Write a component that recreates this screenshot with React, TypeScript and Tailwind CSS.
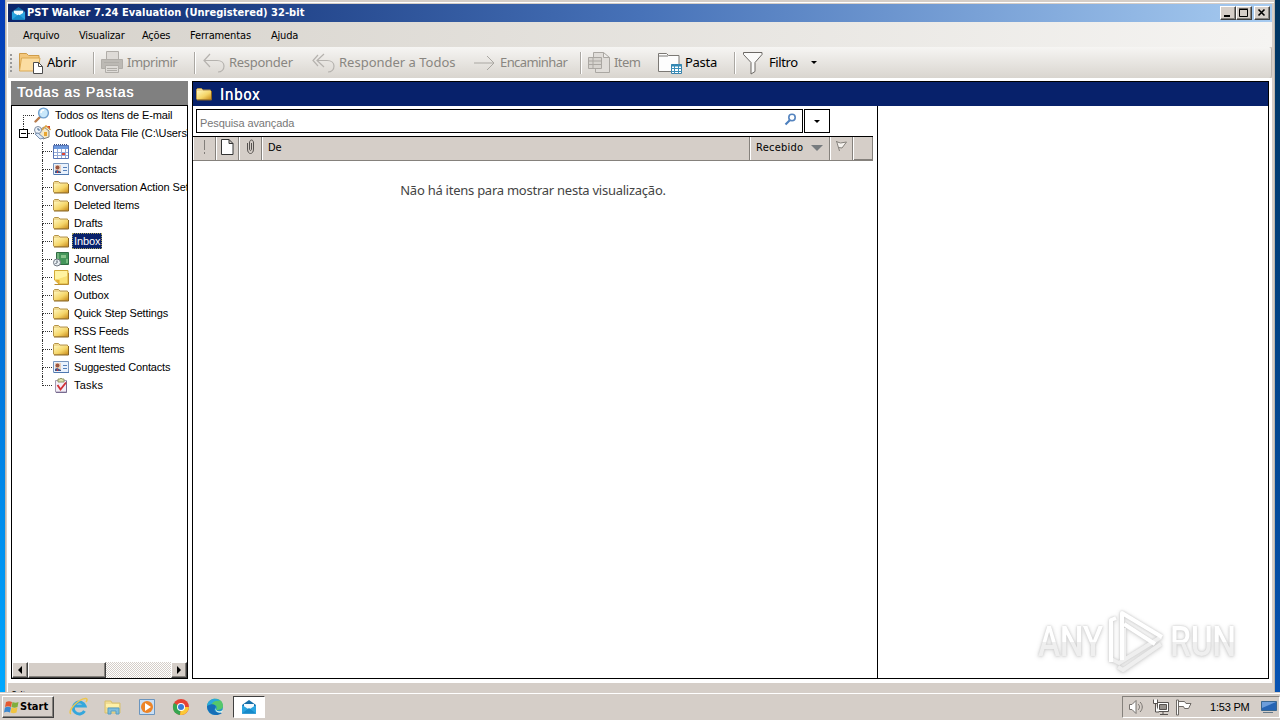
import type { ReactNode } from "react";
import clsx from "clsx";

const FolderIcon = () => (
  <svg width="16" height="14" viewBox="0 0 16 14" className="shrink-0">
    <defs>
      <linearGradient id="folder" x1="0" y1="0" x2="1" y2="1">
        <stop offset="0" stopColor="#fff6b8" />
        <stop offset="0.55" stopColor="#f5d568" />
        <stop offset="1" stopColor="#c98c1c" />
      </linearGradient>
    </defs>
    <path d="M.5 12V2.500l1-1h4l1.500 1.500h7.500v9.500H1z" fill="#f0d990" stroke="#b6954a" />
    <path d="M1 4h14v8.500H1z" fill="url(#folder)" />
    <path d="M1 13h14.500V4" fill="none" stroke="#8a6420" />
  </svg>
);

const SearchIcon = () => (
  <svg width="16" height="16" viewBox="0 0 16 16" className="shrink-0">
    <path d="M6 10L1.500 14.500" stroke="#b87b4b" strokeWidth="2.400" strokeLinecap="round" />
    <circle cx="9.500" cy="6" r="4.900" fill="#c9e8fb" stroke="#6f9fce" strokeWidth="1.400" />
    <path d="M7 6a3 3 0 0 1 3-3" stroke="#fff" strokeWidth="1.500" fill="none" />
  </svg>
);

const OutlookIcon = () => (
  <svg width="17" height="16" viewBox="0 0 17 16" className="shrink-0">
    <path d="M3 6.500l6 7.500 6-2V6L10 2z" fill="#f2e8c8" stroke="#85837c" />
    <path d="M8 5l4-4 4.500 4" fill="none" stroke="#dba445" strokeWidth="1.600" />
    <path d="M10 7h3v4h-3z" fill="#e9a531" />
    <circle cx="4" cy="5" r="3.500" fill="#edf3fa" stroke="#7e8ca0" />
    <path d="M4 3v2h2" stroke="#45688f" fill="none" />
    <path d="M1 9l5 5 4-1-6-5z" fill="#dce9f8" stroke="#7990b0" />
    <path d="M13 1h3v3" fill="#d54a2a" />
  </svg>
);

const CalendarIcon = () => (
  <svg width="16" height="15" viewBox="0 0 16 15">
    <path d="M.5 1.500h15v13H.5z" fill="#fff" stroke="#5874b4" />
    <path d="M1 2h14v3H1z" fill="#6c98dd" />
    <path d="M1 .5h14" stroke="#334f88" strokeDasharray="1 1" />
    <path d="M1 8.500h14M1 11.500h14M4.500 5v9M8.500 5v9M12.500 5v9" stroke="#93a9d6" />
    <path d="M9 9h3v2H9z" fill="#e14635" />
  </svg>
);

const ContactsIcon = () => (
  <svg width="16" height="12" viewBox="0 0 16 12">
    <path d="M.5.5h15v11H.5z" fill="#e9f2fd" stroke="#7896be" />
    <path d="M2 2h6v8H2z" fill="#ead1be" />
    <circle cx="4.500" cy="4.500" r="2" fill="#9c5640" />
    <path d="M2 10V8l2-1 4 2v1z" fill="#3e578b" />
    <path d="M4 8h1v2H4z" fill="#d9352e" />
    <path d="M10 4.500h4M10 7.500h4" stroke="#5680b9" />
    <path d="M1 11.500h15" stroke="#4e78b0" />
  </svg>
);

const JournalIcon = () => (
  <svg width="16" height="16" viewBox="0 0 16 16">
    <path d="M3.500 1.500h12v12h-12z" fill="#44965a" stroke="#2f6b42" />
    <path d="M5 2v11" stroke="#a2d0a1" />
    <path d="M8 4h5v3H8z" fill="#88c38b" />
    <path d="M13 8h2v4h-2z" fill="#76bb80" />
    <circle cx="4" cy="11.500" r="3.500" fill="#e7edf1" stroke="#6e7680" />
    <path d="M4 9.500v2L2.500 13" stroke="#424c5b" fill="none" />
  </svg>
);

const NotesIcon = () => (
  <svg width="15" height="15" viewBox="0 0 15 15">
    <path d="M.5.5h13.500v13.500H5L.5 10z" fill="#fae276" stroke="#d2aa37" />
    <path d="M1 1h12v5L1 10z" fill="#fff3a1" />
    <path d="M1 9.500l4.500.5v4z" fill="#e5ad35" />
    <path d="M.5 14.500h14V3" stroke="#b88c31" fill="none" />
  </svg>
);

const TasksIcon = () => (
  <svg width="14" height="16" viewBox="0 0 14 16">
    <path d="M1.500 3.500h11v11.500h-11z" fill="#f3eef8" stroke="#a399b0" />
    <path d="M12.500 4v11.500H2" stroke="#786c91" fill="none" />
    <path d="M4 5V2h2l1-1 1 1h2v3z" fill="#dce1aa" stroke="#929666" />
    <path d="M3.500 8l3 4.500L12 5.500" stroke="#d13236" strokeWidth="1.900" fill="none" />
  </svg>
);

const MailLogo = ({ size }: { size: number }) => (
  <svg width={size} height={size} viewBox="0 0 16 16">
    <path d="M8 1l7 5v8.500H1V6z" fill="#156ea9" />
    <path d="M3 5h10v6H3z" fill="#f4fbff" />
    <path d="M1 6l7 4.500L15 6v8.500H1z" fill="#2aa4e0" />
    <path d="M1 14.500L8 9l7 5.500z" fill="#168aca" />
  </svg>
);

const Reply = ({ all = false }: { all?: boolean }) => (
  <svg width="24" height="22" viewBox="0 0 24 22" fill="none" stroke="#b5b2ae" strokeWidth="1.200">
    <path d={all ? "M12 2L5 8.500l7 6.500M6 3L1 8.500l5 5.500M5 8.500h10c4.500 0 7 2.500 7 5.500 0 3.500-2.500 6-6 6" : "M7 2L1 8.500l6 6.500M1 8.500h13c4.500 0 7 2.500 7 5.500 0 3.500-2.500 6-6 6"} />
  </svg>
);

const ToolSeparator = () => <span className="h-[22px] w-px shrink-0 bg-[#aaa7a2] shadow-[1px_0_0_#fff]" />;

interface ToolProps {
  label: string;
  icon: ReactNode;
  disabled?: boolean;
  className?: string;
}

const ToolButton = ({ label, icon, disabled, className }: ToolProps) => (
  <button
    type="button"
    className={clsx("flex shrink-0 items-center whitespace-nowrap text-[13px]", disabled ? "text-[#898681]" : "text-black", className)}
  >
    {icon}
    <span>{label}</span>
  </button>
);

const MENUS = [
  { label: "Arquivo", className: "w-14" },
  { label: "Visualizar", className: "w-[63px]" },
  { label: "Ações", className: "w-12" },
  { label: "Ferramentas", className: "w-[81px] tracking-[-0.12px]" },
  { label: "Ajuda", className: "w-12" },
];

const FOLDERS: { name: string; icon: ReactNode; tracking: string }[] = [
  { name: "Calendar", icon: <CalendarIcon />, tracking: "tracking-[-0.15px]" },
  { name: "Contacts", icon: <ContactsIcon />, tracking: "tracking-[-0.1px]" },
  { name: "Conversation Action Set", icon: <FolderIcon />, tracking: "tracking-[-0.12px]" },
  { name: "Deleted Items", icon: <FolderIcon />, tracking: "tracking-[-0.2px]" },
  { name: "Drafts", icon: <FolderIcon />, tracking: "tracking-[-0.1px]" },
  { name: "Inbox", icon: <FolderIcon />, tracking: "tracking-[-0.1px]" },
  { name: "Journal", icon: <JournalIcon />, tracking: "tracking-[-0.15px]" },
  { name: "Notes", icon: <NotesIcon />, tracking: "tracking-[-0.1px]" },
  { name: "Outbox", icon: <FolderIcon />, tracking: "tracking-[-0.1px]" },
  { name: "Quick Step Settings", icon: <FolderIcon />, tracking: "tracking-[-0.13px]" },
  { name: "RSS Feeds", icon: <FolderIcon />, tracking: "tracking-[-0.2px]" },
  { name: "Sent Items", icon: <FolderIcon />, tracking: "tracking-[-0.22px]" },
  { name: "Suggested Contacts", icon: <ContactsIcon />, tracking: "tracking-[-0.15px]" },
  { name: "Tasks", icon: <TasksIcon />, tracking: "tracking-[0.2px]" },
];

const bevel =
  "border border-t-white border-l-white border-r-[#404040] border-b-[#404040] bg-[#d5cec8] shadow-[inset_-1px_-1px_0_#85817c]";

const TitleBar = () => (
  <header className="flex h-[18px] items-center bg-linear-to-r from-[#0b246a] via-[#4772b8] to-[#a7cbf0] pl-[3px] pr-[2px]">
    <MailLogo size={15} />
    <h1 className="ml-px grow whitespace-nowrap pt-px font-['DejaVu_Sans_Condensed','DejaVu_Sans',sans-serif] text-[11px] font-bold tracking-[0.04px] text-white [font-stretch:condensed]">
      PST Walker 7.24 Evaluation (Unregistered) 32-bit
    </h1>
    {["min", "max", "close"].map((kind) => (
      <button key={kind} type="button" aria-label={kind} className={clsx("flex h-[14px] w-4 items-center justify-center", bevel, kind === "close" && "ml-[2px]")}>
        <svg width="10" height="10" viewBox="0 0 10 10" stroke="#000" fill="none">
          {kind === "min" && <path d="M1 8h6" strokeWidth="2" />}
          {kind === "max" && <path d="M.5 1.500h8v7h-8zM0 1h9" />}
          {kind === "close" && <path d="M1.500 1.500l6 6M7.500 1.500l-6 6" strokeWidth="1.600" />}
        </svg>
      </button>
    ))}
  </header>
);

const Toolbar = () => (
  <div className="flex h-[31px] items-center rounded-r-[3px] border-r border-[#bcb8b2] bg-linear-to-b from-[#f6f5f3] to-[#d9d5cf] font-['Noto_Sans',sans-serif]">
    <span className="ml-[2px] h-[18px] w-[2px] bg-[repeating-linear-gradient(to_bottom,#999_0_2px,transparent_2px_4px)]" />
    <ToolButton
      label="Abrir"
      className="ml-[7px] w-[74px] tracking-[-0.2px]"
      icon={
        <svg width="25" height="23" viewBox="0 0 25 23" className="mr-[3px]">
          <path d="M.5 18V2.500h7l2 2H20V18z" fill="#f3c77c" stroke="#cf9c49" />
          <path d="M.5 20l2-13H21l-2 13z" fill="#fbdda1" stroke="#dba953" />
          <path d="M14.500 11.500h5l4 4v7h-9z" fill="#fff" stroke="#4c4c4c" />
          <path d="M19.500 11.500v4h4" fill="none" stroke="#4c4c4c" />
        </svg>
      }
    />
    <ToolSeparator />
    <ToolButton
      disabled
      label="Imprimir"
      className="ml-[6px] w-[94px] tracking-[-0.5px]"
      icon={
        <svg width="24" height="23" viewBox="0 0 24 23" fill="#dedbd7" stroke="#b0ada8" className="mr-[3px]">
          <path d="M6.500 8V.5h12V8" />
          <path d="M1.500 8.500h21v9h-21z" fill="#bcb9b4" />
          <path d="M5.500 14.500h13v7h-13zM4 11.500h15M7 17.500h10M7 19.500h10" />
        </svg>
      }
    />
    <ToolSeparator />
    <ToolButton disabled label="Responder" className="ml-2 w-[107px] tracking-[-0.28px]" icon={<span className="mr-[2px]"><Reply /></span>} />
    <ToolButton disabled label="Responder a Todos" className="ml-[2px] w-[160px] tracking-[0px]" icon={<span className="mr-[3px]"><Reply all /></span>} />
    <ToolButton
      disabled
      label="Encaminhar"
      className="ml-[2px] w-[106px] tracking-[-0.58px]"
      icon={
        <svg width="23" height="20" viewBox="0 0 23 20" fill="none" stroke="#aaa7a2" className="mr-[3px]">
          <path d="M0 10h20M13 3l7 7-7 7" />
        </svg>
      }
    />
    <ToolSeparator />
    <ToolButton
      disabled
      label="Item"
      className="ml-[6px] w-[71px] tracking-[-0.6px]"
      icon={
        <svg width="24" height="24" viewBox="0 0 24 24" fill="none" stroke="#aaa7a2" className="mr-[3px]">
          <path d="M6.500 6V1.500h10l6 5v15h-14V18M16.500 1.500v5h6" fill="#e0ddd9" />
          <path d="M1.500 6.500h13v11h-13zM1.500 10h13M1.500 13.500h13M6 6.500v11" fill="#d7d4cf" />
        </svg>
      }
    />
    <ToolButton
      label="Pasta"
      className="w-[76px] tracking-[-0.3px]"
      icon={
        <svg width="25" height="24" viewBox="0 0 25 24" className="mr-[2px]">
          <path d="M.5 20.500v-18h8l2 2H21v16z" fill="#fdfdfd" stroke="#7b7874" />
          <path d="M1 5h9" stroke="#7b7874" />
          <path d="M13.500 13.500h10v9h-10z" fill="#fff" stroke="#3b80a8" />
          <path d="M13 14.500h11" stroke="#3189b4" strokeWidth="2" />
          <path d="M13 17.500h11M13 20.500h11M16.500 13v10M20.500 13v10" stroke="#3a8db8" />
        </svg>
      }
    />
    <ToolSeparator />
    <ToolButton
      label="Filtro"
      className="ml-2 w-[68px] tracking-[-0.4px]"
      icon={
        <svg width="20" height="24" viewBox="0 0 20 24" className="mr-[6px]">
          <path d="M.5 1.500h18.500v2l-7 8v9l-4 2.500V11.500l-7.500-8z" fill="#fafaf9" stroke="#6c6965" />
        </svg>
      }
    />
    <span className="border-x-3 border-t-3 border-x-transparent border-t-black" />
  </div>
);

const FolderTree = () => (
  <aside className="flex w-[177px] shrink-0 flex-col">
    <h2 className="h-6 shrink-0 whitespace-nowrap bg-[#808080] pl-[6px] font-['Liberation_Sans',sans-serif] text-sm leading-[23px] tracking-[0.97px] text-white [text-shadow:0.4px_0_0_white]">
      Todas as Pastas
    </h2>
    <div className="flex min-h-0 grow flex-col overflow-hidden border border-black font-['Liberation_Sans',sans-serif] text-[11px] leading-[18px] text-black">
      <div className="flex h-[18px] shrink-0 items-center whitespace-nowrap pl-[11px]">
        <span className="mt-[9px] h-[9px] w-[11px] shrink-0 border-t border-l border-dotted border-[#333]" />
        <SearchIcon />
        <span className="ml-[5px] tracking-[-0.13px]">Todos os Itens de E-mail</span>
      </div>
      <div className="flex h-[18px] shrink-0 items-center whitespace-nowrap pl-[7px]">
        <span className="relative flex size-[9px] shrink-0 items-center justify-center border border-black">
          <span className="h-px w-[5px] bg-black" />
          <span className="absolute bottom-2 left-[3px] h-[5px] border-l border-dotted border-[#333]" />
        </span>
        <span className="w-[6px] shrink-0 border-t border-dotted border-[#333]" />
        <OutlookIcon />
        <span className="ml-1 tracking-[-0.1px]">Outlook Data File (C:\Users\</span>
      </div>
      {FOLDERS.map((folder, i) => (
        <div key={folder.name} className="flex h-[18px] shrink-0 items-center whitespace-nowrap pl-[30px]">
          <span className="flex h-full w-[10px] shrink-0 flex-col">
            <span className="h-[10px] border-b border-l border-dotted border-[#333]" />
            <span className={clsx("h-2", i < FOLDERS.length - 1 && "border-l border-dotted border-[#333]")} />
          </span>
          <span className="flex w-[18px] shrink-0 justify-center">{folder.icon}</span>
          <span className={clsx("ml-[2px] px-[2px] leading-4", folder.tracking, folder.name === "Inbox" && "bg-[#08216b] text-white outline outline-1 -outline-offset-1 outline-dotted outline-[#a6a05a]")}>
            {folder.name}
          </span>
        </div>
      ))}
      <div className="mt-auto flex h-4 shrink-0 bg-[#ece9e5] bg-[conic-gradient(#fff_25%,#d5cec8_0_50%,#fff_0_75%,#d5cec8_0)] bg-size-[2px_2px]">
        <span className={clsx("flex w-4 items-center justify-center", bevel)}>
          <i className="border-y-[4px] border-r-4 border-y-transparent border-r-black" />
        </span>
        <span className={clsx("w-[78px]", bevel)} />
        <span className={clsx("ml-auto flex w-4 items-center justify-center", bevel)}>
          <i className="border-y-[4px] border-l-4 border-y-transparent border-l-black" />
        </span>
      </div>
    </div>
  </aside>
);

const cell = "flex h-full shrink-0 items-center border-r border-[#85817c] shadow-[inset_1px_0_0_#fff]";

const MessageList = () => (
  <section className="flex w-[684px] flex-col">
    <div className="flex h-[30px] shrink-0 items-start gap-px pl-[3px] pt-[3px]">
      <div className="flex h-6 w-[607px] items-center justify-between border border-black pl-[3px] pr-[5px]">
        <span className="pt-1 font-['Liberation_Sans',sans-serif] text-[11px] tracking-[-0.1px] text-[#777]">Pesquisa avançada</span>
        <svg width="13" height="13" viewBox="0 0 13 13" className="-mt-1">
          <path d="M6 7l-4.500 4.500" stroke="#4c7fbd" strokeWidth="2.200" />
          <circle cx="8" cy="4.500" r="3.200" fill="#fff" stroke="#5584bf" strokeWidth="1.600" />
        </svg>
      </div>
      <div className="flex h-6 w-[26px] items-center justify-center border border-black">
        <span className="border-x-3 border-t-3 border-x-transparent border-t-black" />
      </div>
    </div>
    <div className="flex h-[25px] w-[680px] shrink-0 border-t border-b border-t-black border-b-[#85817c] bg-[#d5cec8] font-['DejaVu_Sans_Condensed','DejaVu_Sans',sans-serif] text-[11px] text-black [font-stretch:condensed]">
      <span className={clsx(cell, "w-[23px] justify-center")}>
        <svg width="3" height="14" viewBox="0 0 3 14" stroke="#827e7a" className="-mt-[3px]"><path d="M1.500 0v10M1.500 12v2" /></svg>
      </span>
      <span className={clsx(cell, "w-[23px] justify-center")}>
        <svg width="13" height="16" viewBox="0 0 13 16" className="-mt-[3px]">
          <path d="M.5.5h7.500l4 4v11H.5zM8 .5v4h4" fill="#fff" stroke="#333" />
        </svg>
      </span>
      <span className={clsx(cell, "w-[23px] justify-center")}>
        <svg width="9" height="16" viewBox="0 0 9 16" className="-mt-[3px]" fill="none" stroke="#55514e">
          <path d="M1.500 4v6c0 6 6 6 6 0V4c0-4-4-4-4 0v6c0 2 2 2 2 0V4" />
        </svg>
      </span>
      <span className={clsx(cell, "w-[488px] pb-px pl-[6px]")}>De</span>
      <span className={clsx(cell, "w-20 pb-px pl-[6px] tracking-[0.25px]")}>
        <span className="w-[55px]">Recebido</span>
        <i className="-mt-px border-x-[6px] border-t-[6px] border-x-transparent border-t-[#777b7e]" />
      </span>
      <span className={clsx(cell, "w-[23px] justify-center")}>
        <svg width="12" height="13" viewBox="0 0 12 13" className="-mt-1">
          <path d="M1.500 1l3 10M1 1.500l4.500 1.500 6-1-4.500 6-3.500-.5" fill="#f5f2ee" stroke="#85817c" />
        </svg>
      </span>
      <span className="grow shadow-[inset_1px_0_0_#fff,inset_-1px_-1px_0_#85817c]" />
    </div>
    <p className="mt-5 w-[680px] text-center font-['Noto_Sans',sans-serif] text-[13px] leading-[18px] tracking-[-0.25px] text-[#444]">
      Não há itens para mostrar nesta visualização.
    </p>
  </section>
);

const WatermarkText = ({ children }: { children: string }) => (
  <span className="w-16 shrink-0">
    <span className="inline-block origin-left scale-x-[0.78] bg-linear-to-b from-white from-52% to-[#efefef] to-52% bg-clip-text text-transparent">
      {children}
    </span>
  </span>
);

const Watermark = () => (
  <div className="absolute right-[34px] bottom-[4px] flex h-[66px] w-[196px] items-center justify-between font-['Roboto',sans-serif] text-[43px] font-medium tracking-[-0.5px] [filter:drop-shadow(0_0_1px_#c8c8c8)_drop-shadow(0_1px_2px_#dcdcdc)]">
    <WatermarkText>ANY</WatermarkText>
    <svg width="58" height="62" viewBox="0 0 58 62" fill="none" stroke="#fff" strokeWidth="4" strokeLinejoin="round" className="shrink-0">
      <path d="M11 57l5 3 38-26M17 48V18M4 49l8 4 42-26" stroke="#efefef" />
      <path d="M9 8l-5 2v42M15 50V3l40 24M17 14l31 20" />
    </svg>
    <WatermarkText>RUN</WatermarkText>
  </div>
);

const TaskIcons = () => (
  <div className="ml-[15px] flex items-center gap-[14px]">
    <svg width="20" height="20" viewBox="0 0 20 20" fill="none">
      <path d="M15.500 14a6 6 0 1 1 .5-5H6" stroke="#35a7dc" strokeWidth="3" />
      <path d="M2 17c-3-2 2-9 8-13s10-3 7 1" stroke="#edc64d" strokeWidth="1.500" />
    </svg>
    <svg width="20" height="20" viewBox="0 0 20 20">
      <path d="M2 4h6l1 2h8v10H2z" fill="#f0dc94" stroke="#d8c06c" />
      <path d="M3 7h13v3H3z" fill="#fff1a7" />
      <path d="M5 17v-6h11v6h-3v-3H8v3z" fill="#80bddd" stroke="#559fc4" />
    </svg>
    <svg width="20" height="20" viewBox="0 0 20 20">
      <path d="M2.500 2.500h15v15h-15z" fill="#c9dff5" stroke="#6b95be" />
      <circle cx="10" cy="10" r="6" fill="#ed8427" />
      <path d="M8 6v8l6-4z" fill="#fff" />
    </svg>
    <svg width="20" height="20" viewBox="0 0 20 20">
      <circle cx="10" cy="10" r="8" fill="#e64335" />
      <path d="M10 10L3 6a8 8 0 0 0 6 12z" fill="#36a650" />
      <path d="M10 10h8a8 8 0 0 1-9 8z" fill="#fbc936" />
      <circle cx="10" cy="10" r="4" fill="#fff" />
      <circle cx="10" cy="10" r="3" fill="#377dd9" />
    </svg>
    <svg width="20" height="20" viewBox="0 0 20 20">
      <circle cx="10" cy="10" r="8" fill="#2096c9" />
      <path d="M2 9c2-10 16-9 16 0 0 3-3 4-7 4 2-3 0-6-4-5-2 0-4 1-5 1z" fill="#55c76b" />
      <path d="M2 9C3 1 12 0 15 4c-4-1-7 0-9 4z" fill="#2aa8dc" />
      <path d="M2 9c5-3 9-2 9 2-3 1-2 5 6 5-7 5-15 0-15-7z" fill="#166eb8" />
      <path d="M11 10c-1 3 1 5 5 4l2-1-1 2c-4 2-8-1-6-5z" fill="#d9f2ee" />
    </svg>
  </div>
);

const Taskbar = () => (
  <footer className="flex h-7 shrink-0 items-center border-t border-[#d5cec8] bg-[#d5cec8] pt-px shadow-[inset_0_1px_0_#fff]">
    <button type="button" className={clsx("ml-[2px] flex h-[22px] w-[52px] items-center", bevel)}>
      <svg width="16" height="16" viewBox="0 0 16 16" className="ml-px">
        <path d="M2 3c2-1 4-1 6 0L7 8c-2-1-4-1-6 0z" fill="#e45930" />
        <path d="M8.500 3c2 1 4 1 6 0l-1 5c-2 1-4 1-6 0z" fill="#80ae3c" />
        <path d="M1 8.500c2-1 4-1 6 0l-1 5c-2-1-4-1-6 0z" fill="#3b88d0" />
        <path d="M7.500 8.500c2 1 4 1 6 0l-1 5c-2 1-4 1-6 0z" fill="#f0c441" />
      </svg>
      <span className="font-['DejaVu_Sans_Condensed','DejaVu_Sans',sans-serif] text-[11px] font-bold text-black [font-stretch:condensed]">Start</span>
    </button>
    <TaskIcons />
    <button type="button" aria-label="PST Walker" className="ml-2 flex h-[22px] w-8 items-center justify-center border border-t-[#404040] border-l-[#404040] border-r-white border-b-white bg-white">
      <MailLogo size={16} />
    </button>
    <div className="ml-auto flex h-[22px] w-[158px] items-center border border-t-[#85817c] border-l-[#85817c] border-r-white border-b-white pl-[5px]">
      <svg width="18" height="18" viewBox="0 0 18 18" fill="#fff" stroke="#77736f">
        <path d="M1.500 6.500H4l4-4v13l-4-4H1.500z" />
        <path d="M10 6c2 2 2 4 0 6M12 4c3 3 3 7 0 10" fill="none" />
      </svg>
      <svg width="18" height="18" viewBox="0 0 18 18" fill="#fff" stroke="#56524f" className="ml-[6px]">
        <path d="M5.500 4.500h11v9h-11zM8 16.500h8M11 14v2" />
        <path d="M7.500 6.500h7v5h-7z" fill="#96918c" />
        <path d="M1.500 1.500v4h4v-4M3.500 6v8H7" />
      </svg>
      <svg width="18" height="18" viewBox="0 0 18 18" fill="#fff" stroke="#6d6965" className="ml-[5px]">
        <path d="M1.500 2v15h2V2zM3.500 3.500h6l1.500 2h5l-2.500 5h-4l-1-2h-5z" />
      </svg>
      <span className="ml-[17px] w-[44px] whitespace-nowrap font-['Liberation_Sans',sans-serif] text-[11px] tracking-[-0.2px] text-black">1:53 PM</span>
      <svg width="16" height="14" viewBox="0 0 16 14" className="ml-[7px]">
        <path d="M.5 1.500h15v9H.5z" fill="#2765b4" stroke="#396790" />
        <path d="M1 2h14L1 8z" fill="#6d9edb" />
        <path d="M2 12.500h10" stroke="#637788" />
      </svg>
    </div>
  </footer>
);

export default function App() {
  return (
    <div className="flex h-[720px] w-[1280px] flex-col overflow-hidden">
      <div className="flex h-[692px] shrink-0 justify-between bg-linear-to-b from-[#063ab5] to-[#00a8ff]">
        <span className="w-[5px] shrink-0" />
        <main className="flex w-[1270px] shrink-0 flex-col border-r border-l border-[#bdb6ac] bg-[#d5cec8] px-[2px] pt-1 shadow-[inset_1px_2px_0_#d5cec8,inset_2px_3px_0_#fff]">
          <TitleBar />
          <nav className="flex h-[25px] shrink-0 items-center bg-linear-to-r from-[#d6d2cb] to-[#f5f4f2] pt-[3px] pl-[15px] font-['DejaVu_Sans_Condensed','DejaVu_Sans',sans-serif] text-[11px] tracking-[-0.2px] text-black [font-stretch:condensed]">
            {MENUS.map((menu) => (
              <button key={menu.label} type="button" className={clsx("shrink-0 whitespace-nowrap text-left", menu.className)}>
                {menu.label}
              </button>
            ))}
          </nav>
          <Toolbar />
          <div className="flex h-[605px] shrink-0 gap-1 bg-white px-[3px] pt-[3px] pb-1">
            <FolderTree />
            <article className="flex grow flex-col border border-black bg-white">
              <h2 className="flex h-6 shrink-0 items-center bg-[#07216b] pl-[3px] font-['DejaVu_Sans_Condensed','DejaVu_Sans',sans-serif] text-[15px] tracking-[0.7px] text-white [font-stretch:condensed]">
                <FolderIcon />
                <span className="ml-2 pt-[2px] [text-shadow:0.3px_0_0_white]">Inbox</span>
              </h2>
              <div className="flex grow">
                <MessageList />
                <section className="relative grow border-l border-black">
                  <Watermark />
                </section>
              </div>
            </article>
          </div>
          <div className="h-[9px] overflow-hidden pl-[3px] pt-[6px] font-['Liberation_Sans',sans-serif] text-[11px] leading-[12px]">0 itens</div>
        </main>
        <span className="w-[5px] shrink-0 bg-linear-to-b from-[#00345f] to-[#0753b3]" />
      </div>
      <Taskbar />
    </div>
  );
}
